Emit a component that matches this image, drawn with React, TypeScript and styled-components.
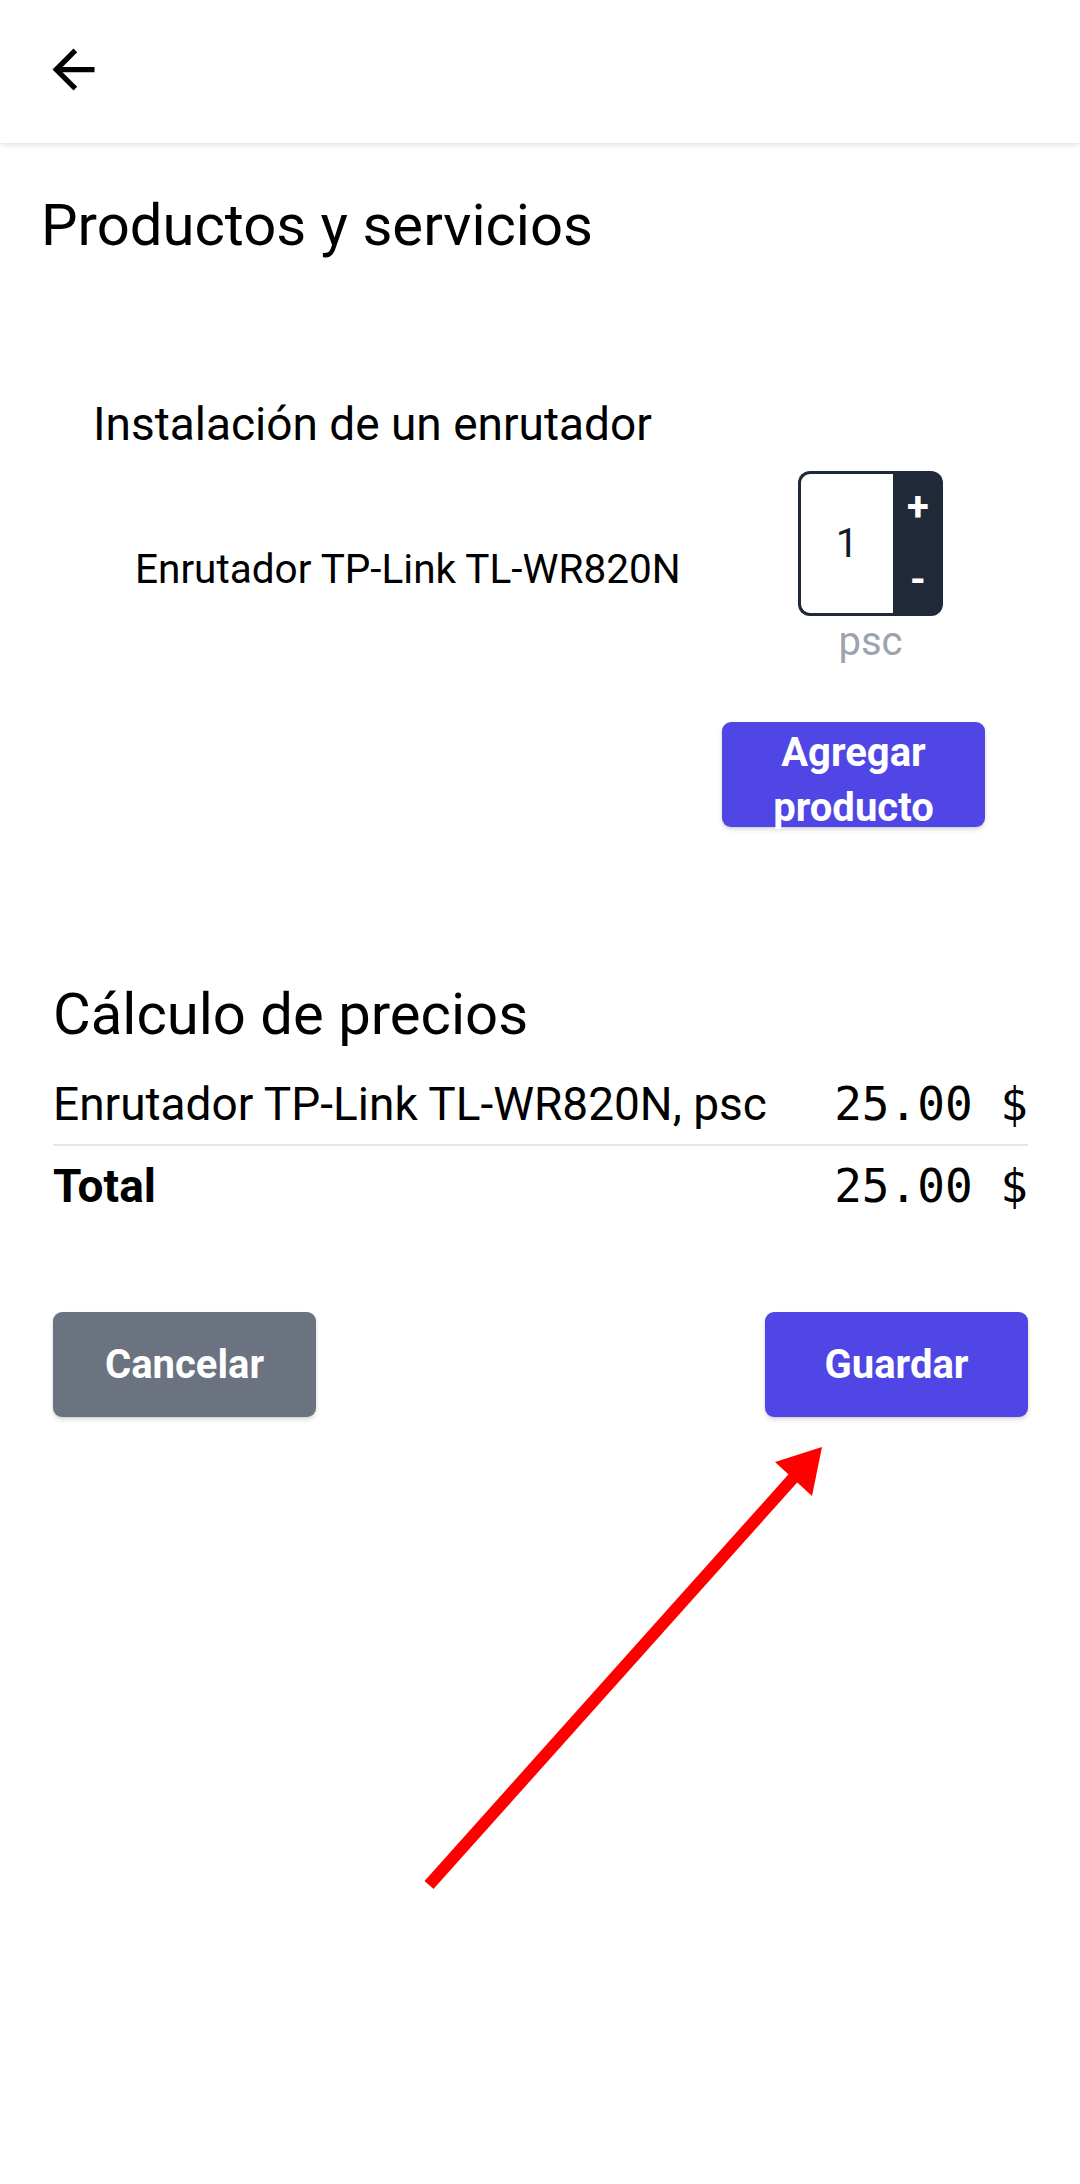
import React from "react";
import styled, { createGlobalStyle } from "styled-components";

const GlobalStyle = createGlobalStyle`
  html, body { margin: 0; padding: 0; background: #ffffff; }
  body { font-family: Roboto, "Noto Sans", "Liberation Sans", sans-serif; color: #000; }
  * { box-sizing: border-box; }
`;

const Page = styled.div`
  position: relative;
  width: 1080px;
  min-height: 2184px;
  background: #ffffff;
`;

const Header = styled.header`
  height: 143px;
  display: flex;
  align-items: center;
  padding-left: 42px;
  background: #ffffff;
  box-shadow: 0 2px 6px rgba(0, 0, 0, 0.12);
`;

const IconButton = styled.button`
  width: 63px;
  height: 63px;
  margin-top: -5px;
  padding: 0;
  border: none;
  background: transparent;
  display: flex;
  align-items: center;
  justify-content: center;
  color: #000;
`;

const Main = styled.main`
  display: flex;
  flex-direction: column;
`;

const PageTitle = styled.h1`
  margin: 48px 0 0 41px;
  font-size: 58px;
  line-height: 68px;
  font-weight: 400;
`;

const ProductCard = styled.section`
  margin: 137px 95px 0 93px;
  display: flex;
  flex-direction: column;
`;

const ServiceName = styled.h2`
  margin: 0;
  font-size: 46px;
  line-height: 56px;
  font-weight: 400;
`;

const ProductRow = styled.div`
  margin-top: 19px;
  display: flex;
  align-items: center;
  justify-content: space-between;
`;

const ProductName = styled.span`
  padding-left: 42px;
  font-size: 40.5px;
  line-height: 48px;
`;

const QtyColumn = styled.div`
  margin-right: 42px;
  display: flex;
  flex-direction: column;
  align-items: center;
`;

const Stepper = styled.div`
  display: flex;
  width: 145px;
  height: 145px;
`;

const QtyInput = styled.div`
  flex: 1;
  display: flex;
  align-items: center;
  justify-content: center;
  border: 3px solid #1f2937;
  border-right: none;
  border-radius: 12px 0 0 12px;
  font-size: 40px;
  color: #111827;
`;

const StepButtons = styled.div`
  width: 50px;
  display: flex;
  flex-direction: column;
  background: #1f2937;
  border-radius: 0 12px 12px 0;
`;

const StepButton = styled.button`
  flex: 1;
  padding: 0;
  border: none;
  background: transparent;
  color: #ffffff;
  font-family: Roboto, sans-serif;
  font-size: 40px;
  font-weight: 700;
  line-height: 1;
  display: flex;
  align-items: center;
  justify-content: center;
`;

const Unit = styled.span`
  margin-top: 2px;
  font-size: 40px;
  line-height: 48px;
  color: #9ca3af;
`;

const CardActions = styled.div`
  margin-top: 56px;
  display: flex;
  justify-content: flex-end;
`;

const ActionButton = styled.button<{ $variant: "primary" | "secondary"; $shift?: number }>`
  width: 263px;
  height: 105px;
  padding: ${(p) => (p.$shift ? `${p.$shift}px 0 0` : "0")};
  border: none;
  border-radius: 9px;
  background: ${(p) => (p.$variant === "primary" ? "#4f46e5" : "#6b7280")};
  color: #ffffff;
  font-family: Roboto, sans-serif;
  font-size: 40px;
  font-weight: 700;
  line-height: 55px;
  display: flex;
  align-items: center;
  justify-content: center;
  text-align: center;
  box-shadow: 0 3px 5px rgba(0, 0, 0, 0.12), 0 1px 2px rgba(0, 0, 0, 0.08);
`;

const PriceSection = styled.section`
  margin: 153px 52px 0 53px;
  display: flex;
  flex-direction: column;
`;

const SectionTitle = styled.h2`
  margin: 0;
  font-size: 58px;
  line-height: 68px;
  font-weight: 400;
`;

const PriceTable = styled.div`
  margin-top: 16px;
  display: flex;
  flex-direction: column;
`;

const PriceRow = styled.div<{ $total?: boolean }>`
  display: flex;
  justify-content: space-between;
  align-items: baseline;
  padding: 12px 0;
  font-size: 46px;
  line-height: 56px;
  font-weight: ${(p) => (p.$total ? 700 : 400)};
  border-bottom: ${(p) => (p.$total ? "none" : "2px solid #e5e7eb")};
`;

const Amount = styled.span`
  font-family: "DejaVu Sans Mono", "Liberation Mono", monospace;
  font-size: 46px;
  font-weight: 400;
  white-space: pre;
`;

const FormActions = styled.div`
  margin: 86px 52px 0 53px;
  display: flex;
  justify-content: space-between;
`;

const Annotation = styled.svg`
  position: absolute;
  left: 415px;
  top: 1440px;
  pointer-events: none;
`;

export default function App() {
  return (
    <Page>
      <GlobalStyle />
      <Header>
        <IconButton aria-label="Volver">
          <svg width="63" height="63" viewBox="0 0 24 24" fill="currentColor">
            <path d="M20 11H7.83l5.59-5.59L12 4l-8 8 8 8 1.41-1.41L7.83 13H20v-2z" />
          </svg>
        </IconButton>
      </Header>
      <Main>
        <PageTitle>Productos y servicios</PageTitle>
        <ProductCard>
          <ServiceName>Instalación de un enrutador</ServiceName>
          <ProductRow>
            <ProductName>Enrutador TP-Link TL-WR820N</ProductName>
            <QtyColumn>
              <Stepper>
                <QtyInput>1</QtyInput>
                <StepButtons>
                  <StepButton>+</StepButton>
                  <StepButton>-</StepButton>
                </StepButtons>
              </Stepper>
              <Unit>psc</Unit>
            </QtyColumn>
          </ProductRow>
          <CardActions>
            <ActionButton $variant="primary" $shift={10}>
              Agregar
              <br />
              producto
            </ActionButton>
          </CardActions>
        </ProductCard>
        <PriceSection>
          <SectionTitle>Cálculo de precios</SectionTitle>
          <PriceTable>
            <PriceRow>
              <span>Enrutador TP-Link TL-WR820N, psc</span>
              <Amount>25.00 $</Amount>
            </PriceRow>
            <PriceRow $total>
              <span>Total</span>
              <Amount>25.00 $</Amount>
            </PriceRow>
          </PriceTable>
        </PriceSection>
        <FormActions>
          <ActionButton $variant="secondary">Cancelar</ActionButton>
          <ActionButton $variant="primary">Guardar</ActionButton>
        </FormActions>
      </Main>
      <Annotation width="420" height="460" viewBox="0 0 420 460">
        <line x1="14" y1="445" x2="380" y2="36" stroke="#ff0000" strokeWidth="12" />
        <polygon points="407,7 360,22 397,56" fill="#ff0000" />
      </Annotation>
    </Page>
  );
}
